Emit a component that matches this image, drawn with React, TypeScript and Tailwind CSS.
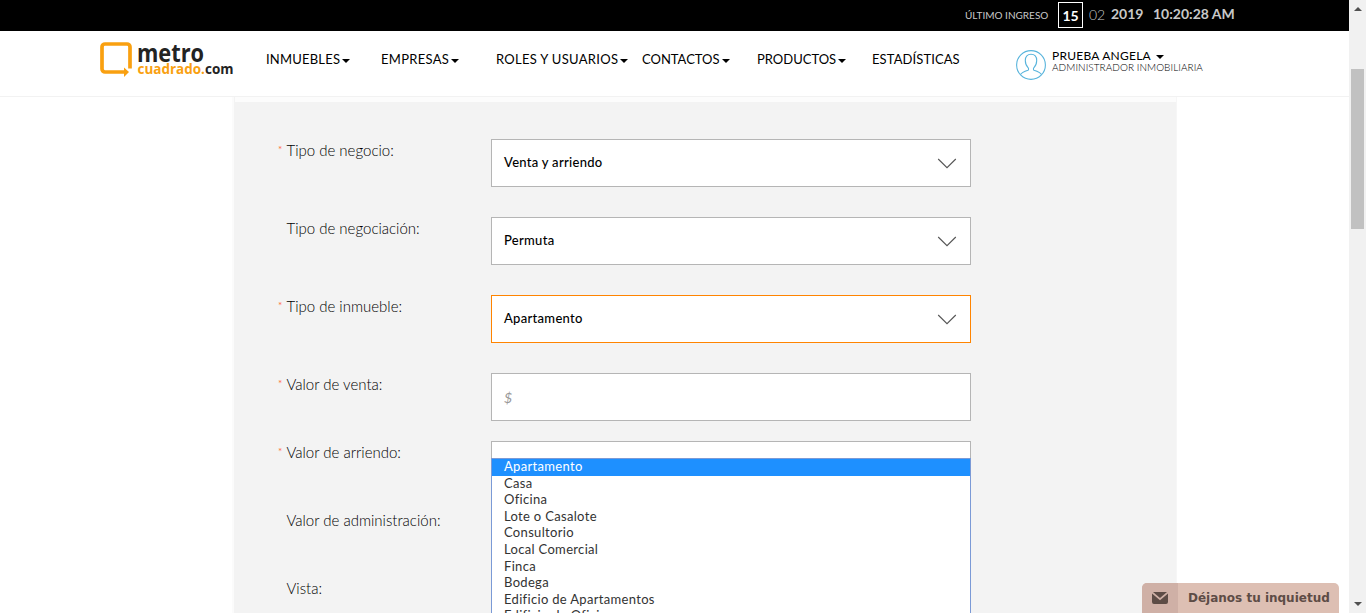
import React from "react";

const Caret = ({ className = "" }: { className?: string }) => (
  <svg className={`h-1 w-2 shrink-0 ${className}`} viewBox="0 0 8 4">
    <path d="M0 0h8L4 4z" fill="currentColor" />
  </svg>
);

const Chevron = () => (
  <svg className="h-[11px] w-5" viewBox="0 0 20 11" fill="none" stroke="#555" strokeWidth="1.1">
    <path d="M1.200 1l8.800 8.700L18.800 1" />
  </svg>
);

const Logo = () => (
  <svg className="block h-[44px] w-[136px] shrink-0 overflow-visible" viewBox="0 -4 136 44">
    <path d="M30 28.500V7a3 3 0 0 0-3-3H5a3 3 0 0 0-3 3V29a3 3 0 0 0 3 3h20" fill="none" stroke="#f9a010" strokeWidth="3.700" />
    <path d="M24 27.500l5 4.600-5 4.900z" fill="#f9a010" />
    <text x="37" y="21.500" fontFamily="Open Sans" fontWeight="700" fontSize="25" textLength="67" lengthAdjust="spacingAndGlyphs" fill="#232323">metro</text>
    <text x="37.500" y="33.500" fontFamily="Open Sans" fontWeight="700" fontSize="14.500" textLength="96" lengthAdjust="spacingAndGlyphs" fill="#f9a010">cuadrado.<tspan fill="#232323">com</tspan></text>
  </svg>
);

const nav = [
  { text: "INMUEBLES", box: "w-[115px]", label: "w-[74px] tracking-[0.2px]", caret: true },
  { text: "EMPRESAS", box: "w-[115px]", label: "w-[68px] tracking-[0.3px]", caret: true },
  { text: "ROLES Y USUARIOS", box: "w-[146px]", label: "w-[122px] tracking-[0.3px]", caret: true },
  { text: "CONTACTOS", box: "w-[115px]", label: "w-[78px]", caret: true },
  { text: "PRODUCTOS", box: "w-[115px]", label: "w-[79px]", caret: true },
  { text: "ESTADÍSTICAS", box: "w-[144px]", label: "w-[88px] tracking-[0.1px]", caret: false },
];

const rows = [
  { label: "Tipo de negocio:", req: true, value: "Venta y arriendo", h: "h-[78px]" },
  { label: "Tipo de negociación:", req: false, value: "Permuta", h: "h-[78px]" },
  { label: "Tipo de inmueble:", req: true, value: "Apartamento", active: true, h: "h-[78px]" },
  { label: "Valor de venta:", req: true, placeholder: "$", h: "h-[68px]" },
  { label: "Valor de arriendo:", req: true, menu: true, h: "h-[68px]" },
  { label: "Valor de administración:", req: false, h: "h-[68px]" },
  { label: "Vista:", req: false, h: "h-[68px]" },
];

const options = [
  "Apartamento", "Casa", "Oficina", "Lote o Casalote", "Consultorio", "Local Comercial",
  "Finca", "Bodega", "Edificio de Apartamentos", "Edificio de Oficinas",
];

const Menu = () => (
  <div className="absolute -left-px top-4 z-10 w-[480px] border border-[#7b9ad6] bg-white text-[13px] tracking-[0.32px] text-[#333]">
    {options.map((o, i) => (
      <div key={o} className={`flex h-[16.6px] items-center pb-[1.5px] pl-3 leading-none ${i === 0 ? "bg-[#1e90ff] text-white" : ""}`}>
        {o}
      </div>
    ))}
  </div>
);

export default function App() {
  return (
    <div className="flex h-[613px] w-[1366px] overflow-hidden bg-white font-['Lato',sans-serif] whitespace-nowrap text-black">
      <div className="flex w-[1349px] flex-col">
        <div className="flex h-[31px] shrink-0 items-start bg-black pl-[965px] text-[#c8c8c8]">
          <span className="w-[93px] pt-2 text-[10px] leading-[14px]">ÚLTIMO INGRESO</span>
          <span className="mt-0.5 flex h-[26px] w-[25px] items-center justify-center border border-white text-[14px] font-bold text-white">15</span>
          <span className="ml-1.5 w-[22px] pt-1.5 text-[14px] leading-[18px] font-light">02</span>
          <span className="w-[42px] pt-[5px] text-[14px] leading-[18px] font-bold">2019</span>
          <span className="pt-[5px] text-[14px] leading-[18px] font-bold">10:20:28 AM</span>
        </div>

        <header className="flex h-[66px] shrink-0 border-b border-[#f2f2f2] pl-[100px]">
          <div className="w-[166px] pt-[5px]"><Logo /></div>
          <nav className="flex pt-[19px] text-[13px] leading-[18px]">
            {nav.map((n) => (
              <div key={n.text} className={`flex ${n.box}`}>
                <span className={n.label}>{n.text}</span>
                {n.caret && <Caret className="mt-[9px] ml-0.5" />}
              </div>
            ))}
          </nav>
          <div className="flex">
            <svg className="mt-[19px] h-[30px] w-[30px]" viewBox="0 0 30 30" fill="none" stroke="#58b4dc" strokeWidth="1.100">
              <circle cx="15" cy="15" r="14.400" />
              <path d="M4.500 24.500c1-2 3-2.800 7.500-4.300.7-.3.700-1.700.2-2.400-2-2-2.900-4.300-2.900-7.300 0-3.900 2.200-6.200 5.700-6.200s5.700 2.300 5.700 6.200c0 3-.9 5.300-2.900 7.300-.5.700-.5 2.100.2 2.400 4.500 1.500 6.500 2.300 7.500 4.300" />
            </svg>
            <div className="pt-[18px] pl-1.5">
              <div className="flex items-center gap-[5px] text-[12px] leading-[14px]">
                <span className="tracking-[0.25px]">PRUEBA ANGELA</span>
                <Caret className="mt-px" />
              </div>
              <div className="text-[10px] leading-[9px] font-light tracking-[0.05px]">ADMINISTRADOR INMOBILIARIA</div>
            </div>
          </div>
        </header>

        <main className="ml-[232px] h-[516px] w-[945px] border-r border-l-2 border-r-[#f6f6f6] border-l-[#fbfbfb] bg-[#f3f3f3]">
          <div className="h-[5px] border-l border-[#f3f3f3] bg-[#fcfcfc]" />
          <div className="pt-[37px]">
            {rows.map((r) => (
              <div key={r.label} className={`flex ${r.h}`}>
                <div className="flex w-[257px] pl-11">
                  <span className="w-[8.500px] pt-[3px] text-[10px] leading-[14px] text-[#ff7040]">{r.req ? "*" : ""}</span>
                  <span className="pt-px text-[15px] leading-5 font-light">{r.label}</span>
                </div>
                <div className={`relative flex h-12 w-[480px] items-center justify-between border bg-white pr-[13px] pl-3 text-[13px] ${r.active ? "border-[#ff8400]" : "border-[#b5b5b5]"}`}>
                  {r.value && <span className="font-medium tracking-[0.29px]">{r.value}</span>}
                  {r.value && <Chevron />}
                  {r.placeholder && <span className="pt-px text-[14px] text-[#999] italic">{r.placeholder}</span>}
                  {r.menu && <Menu />}
                </div>
              </div>
            ))}
          </div>
        </main>
      </div>

      <aside className="flex w-[17px] flex-col items-center bg-[#f1f1f1] text-[#505050]">
        <Caret className="mt-[7px] rotate-180" />
        <div className="mt-[58px] h-40 w-[13px] bg-[#c1c1c1]" />
        <Caret className="mt-auto mb-[7px]" />
      </aside>

      <div className="absolute top-[583px] left-[1142px] flex h-[30px] w-[197px] overflow-hidden rounded-t-[5px] bg-[#ddbfb3] font-['DejaVu_Sans',sans-serif] text-[12px] font-bold text-[#5d4c46]">
        <div className="flex w-9 shrink-0 items-center justify-center bg-[#cfb0a6]">
          <svg className="h-3 w-4" viewBox="0 0 16 12" fill="#5d4c46">
            <path d="M1 0h14L8 6z" />
            <path d="M0 1.500l8 6.700 8-6.700V10a2 2 0 0 1-2 2H2a2 2 0 0 1-2-2z" />
          </svg>
        </div>
        <span className="pl-2.5 leading-[30px]">Déjanos tu inquietud</span>
      </div>
    </div>
  );
}
